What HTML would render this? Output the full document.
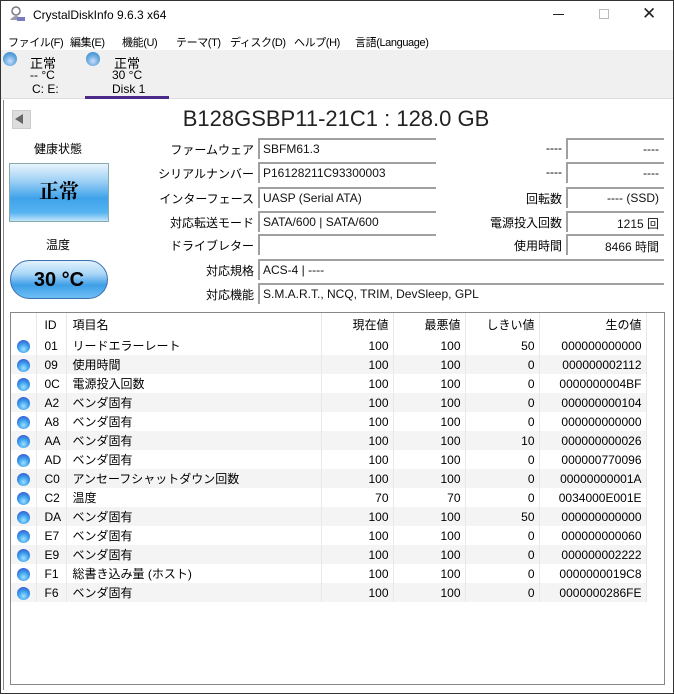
<!DOCTYPE html>
<html><head><meta charset="utf-8"><style>
*{margin:0;padding:0;box-sizing:border-box}
body{width:674px;height:694px;overflow:hidden;background:#fff;font-family:"Liberation Sans","Noto Sans CJK JP",sans-serif;font-size:12px;color:#000;position:relative}
.a{position:absolute;white-space:nowrap}
.win{position:absolute;left:0;top:0;width:674px;height:694px;border:1px solid #333}
.lbl{position:absolute;text-align:right;font-size:12px}
.box{position:absolute;height:21px;border-top:2px solid #a0a0a0;border-left:2px solid #a0a0a0;font-size:12px;padding:2px 0 0 3px;color:#111}
.box.r{text-align:right;padding-right:5px}
table{border-collapse:collapse;position:absolute;left:11px;top:313px;font-size:12px}
td{height:19px;padding:0 4px;border-right:1px solid #e8e8e8;white-space:nowrap}
tr:nth-child(odd) td{background:#f4f4f4}
th{height:23px;font-weight:normal;padding:0 4px;border-right:1px solid #e8e8e8;text-align:left}
.n{text-align:right}
.id{padding-left:8px}
.nm{padding-left:6px}
.dot{display:inline-block;width:13px;height:13px;border-radius:50%;background:radial-gradient(circle at 50% 70%,#9fe0ff 0,#3aa0ee 45%,#3b5fd6 80%,#6a58c8 100%);vertical-align:middle;margin-left:2px}
.m{position:absolute;top:34px;font-size:11px;letter-spacing:-0.4px;white-space:nowrap}
</style></head><body>
<div class="win"></div>
<svg class="a" style="left:8px;top:5px" width="18" height="18" viewBox="0 0 18 18"><circle cx="8" cy="6" r="4" fill="none" stroke="#778" stroke-width="1.5"/><path d="M2 15 Q8 7 14 15Z" fill="#99a" /><rect x="9" y="12" width="8" height="4" fill="#7a7ac0"/></svg>
<div class="a" style="left:33px;top:8px;font-size:12px">CrystalDiskInfo 9.6.3 x64</div>
<div class="a" style="left:553px;top:14px;width:11px;height:1px;background:#222"></div>
<div class="a" style="left:599px;top:9px;width:10px;height:10px;border:1px solid #bbb"></div>
<div class="a" style="left:642px;top:4px;font-size:17px;color:#222">✕</div>
<div class="m" style="left:8px">ファイル(F)</div>
<div class="m" style="left:70px">編集(E)</div>
<div class="m" style="left:122px">機能(U)</div>
<div class="m" style="left:176px">テーマ(T)</div>
<div class="m" style="left:230px">ディスク(D)</div>
<div class="m" style="left:294px">ヘルプ(H)</div>
<div class="m" style="left:355px">言語(Language)</div>
<div class="a" style="left:1px;top:50px;width:672px;height:49px;background:#f0f0f0;border-bottom:1px solid #ddd"></div>
<div class="a dot" style="left:3px;top:52px;width:14px;height:14px;margin:0;background:radial-gradient(circle at 50% 65%,#cdf 0,#6ad 50%,#2b7fd0 100%)"></div>
<div class="a" style="left:30px;top:53px;font-size:13px">正常</div>
<div class="a" style="left:30px;top:68px;font-size:12px">-- °C</div>
<div class="a" style="left:32px;top:82px;font-size:12px">C: E:</div>
<div class="a dot" style="left:86px;top:52px;width:14px;height:14px;margin:0;background:radial-gradient(circle at 50% 65%,#cdf 0,#6ad 50%,#2b7fd0 100%)"></div>
<div class="a" style="left:114px;top:53px;font-size:13px">正常</div>
<div class="a" style="left:112px;top:68px;font-size:12px">30 °C</div>
<div class="a" style="left:112px;top:82px;font-size:12px">Disk 1</div>
<div class="a" style="left:85px;top:96px;width:84px;height:3px;background:#4b2a8a"></div>
<div class="a" style="left:3px;top:100px;width:1px;height:590px;background:#888"></div>
<div class="a" style="left:12px;top:110px;width:19px;height:19px;background:#ddd;border:1px solid #ccc"></div>
<div class="a" style="left:15px;top:114px;width:0;height:0;border-top:5px solid transparent;border-bottom:5px solid transparent;border-right:8px solid #666"></div>
<div class="a" style="left:0;top:106px;width:672px;text-align:center;font-size:22px;color:#222">B128GSBP11-21C1 : 128.0 GB</div>
<div class="a" style="left:10px;top:140px;width:96px;text-align:center;font-size:12px">健康状態</div>
<div class="a" style="left:9px;top:163px;width:100px;height:59px;border:1px solid #8aa;background:linear-gradient(#e8f4fd 0,#9dd0f5 30%,#3fa2ea 60%,#55b3f0 85%,#c0e4fb 100%);text-align:center;font-size:20px;font-weight:bold;line-height:56px;font-family:'Liberation Serif','Noto Serif CJK SC',serif">正常</div>
<div class="a" style="left:10px;top:236px;width:96px;text-align:center;font-size:12px">温度</div>
<div class="a" style="left:10px;top:260px;width:98px;height:39px;border-radius:20px;border:1px solid #3a6fb0;background:linear-gradient(#e3f2fd 0,#a9d6f7 35%,#3f9fe8 65%,#6dbff4 100%);text-align:center;font-size:20px;font-weight:bold;line-height:38px">30 °C</div>
<div class="lbl" style="left:140px;width:114px;top:141px">ファームウェア</div>
<div class="lbl" style="left:140px;width:114px;top:165px">シリアルナンバー</div>
<div class="lbl" style="left:140px;width:114px;top:190px">インターフェース</div>
<div class="lbl" style="left:140px;width:114px;top:214px">対応転送モード</div>
<div class="lbl" style="left:140px;width:114px;top:237px">ドライブレター</div>
<div class="lbl" style="left:140px;width:114px;top:262px">対応規格</div>
<div class="lbl" style="left:140px;width:114px;top:286px">対応機能</div>
<div class="box" style="left:258px;top:138px;width:178px">SBFM61.3</div>
<div class="box" style="left:258px;top:162px;width:178px">P16128211C93300003</div>
<div class="box" style="left:258px;top:187px;width:178px">UASP (Serial ATA)</div>
<div class="box" style="left:258px;top:211px;width:178px">SATA/600 | SATA/600</div>
<div class="box" style="left:258px;top:234px;width:178px"></div>
<div class="box" style="left:258px;top:259px;width:406px">ACS-4 | ----</div>
<div class="box" style="left:258px;top:283px;width:406px">S.M.A.R.T., NCQ, TRIM, DevSleep, GPL</div>
<div class="lbl" style="left:440px;width:122px;top:141px">----</div>
<div class="lbl" style="left:440px;width:122px;top:165px">----</div>
<div class="lbl" style="left:440px;width:122px;top:190px">回転数</div>
<div class="lbl" style="left:440px;width:122px;top:214px">電源投入回数</div>
<div class="lbl" style="left:440px;width:122px;top:237px">使用時間</div>
<div class="box r" style="left:566px;top:138px;width:98px">----</div>
<div class="box r" style="left:566px;top:162px;width:98px">----</div>
<div class="box r" style="left:566px;top:187px;width:98px">---- (SSD)</div>
<div class="box r" style="left:566px;top:211px;width:98px">1215 回</div>
<div class="box r" style="left:566px;top:234px;width:98px">8466 時間</div>
<div class="a" style="left:10px;top:312px;width:655px;height:373px;border:1px solid #888"></div>
<table>
<tr><th style="width:25px"></th><th class="id" style="width:30px">ID</th><th class="nm" style="width:255px">項目名</th><th class="n" style="width:72px">現在値</th><th class="n" style="width:72px">最悪値</th><th class="n" style="width:74px">しきい値</th><th class="n" style="width:107px">生の値</th></tr>
<tr><td><span class="dot"></span></td><td class="id">01</td><td class="nm">リードエラーレート</td><td class="n">100</td><td class="n">100</td><td class="n">50</td><td class="n">000000000000</td></tr>
<tr><td><span class="dot"></span></td><td class="id">09</td><td class="nm">使用時間</td><td class="n">100</td><td class="n">100</td><td class="n">0</td><td class="n">000000002112</td></tr>
<tr><td><span class="dot"></span></td><td class="id">0C</td><td class="nm">電源投入回数</td><td class="n">100</td><td class="n">100</td><td class="n">0</td><td class="n">0000000004BF</td></tr>
<tr><td><span class="dot"></span></td><td class="id">A2</td><td class="nm">ベンダ固有</td><td class="n">100</td><td class="n">100</td><td class="n">0</td><td class="n">000000000104</td></tr>
<tr><td><span class="dot"></span></td><td class="id">A8</td><td class="nm">ベンダ固有</td><td class="n">100</td><td class="n">100</td><td class="n">0</td><td class="n">000000000000</td></tr>
<tr><td><span class="dot"></span></td><td class="id">AA</td><td class="nm">ベンダ固有</td><td class="n">100</td><td class="n">100</td><td class="n">10</td><td class="n">000000000026</td></tr>
<tr><td><span class="dot"></span></td><td class="id">AD</td><td class="nm">ベンダ固有</td><td class="n">100</td><td class="n">100</td><td class="n">0</td><td class="n">000000770096</td></tr>
<tr><td><span class="dot"></span></td><td class="id">C0</td><td class="nm">アンセーフシャットダウン回数</td><td class="n">100</td><td class="n">100</td><td class="n">0</td><td class="n">00000000001A</td></tr>
<tr><td><span class="dot"></span></td><td class="id">C2</td><td class="nm">温度</td><td class="n">70</td><td class="n">70</td><td class="n">0</td><td class="n">0034000E001E</td></tr>
<tr><td><span class="dot"></span></td><td class="id">DA</td><td class="nm">ベンダ固有</td><td class="n">100</td><td class="n">100</td><td class="n">50</td><td class="n">000000000000</td></tr>
<tr><td><span class="dot"></span></td><td class="id">E7</td><td class="nm">ベンダ固有</td><td class="n">100</td><td class="n">100</td><td class="n">0</td><td class="n">000000000060</td></tr>
<tr><td><span class="dot"></span></td><td class="id">E9</td><td class="nm">ベンダ固有</td><td class="n">100</td><td class="n">100</td><td class="n">0</td><td class="n">000000002222</td></tr>
<tr><td><span class="dot"></span></td><td class="id">F1</td><td class="nm">総書き込み量 (ホスト)</td><td class="n">100</td><td class="n">100</td><td class="n">0</td><td class="n">0000000019C8</td></tr>
<tr><td><span class="dot"></span></td><td class="id">F6</td><td class="nm">ベンダ固有</td><td class="n">100</td><td class="n">100</td><td class="n">0</td><td class="n">0000000286FE</td></tr>
</table>
</body></html>
